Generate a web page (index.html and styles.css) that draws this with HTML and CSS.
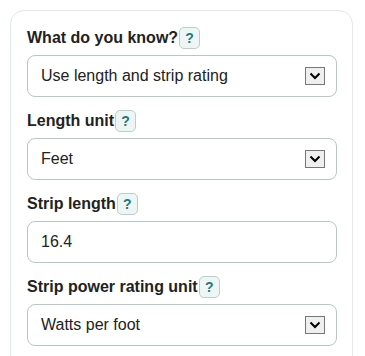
FILE: index.html
```html
<!DOCTYPE html>
<html lang="en">
<head>
    <meta charset="UTF-8">
    <meta name="viewport" content="width=device-width, initial-scale=1.0">
    <title>LED strip calculator</title>
    <link rel="stylesheet" href="styles.css">
</head>
<body>
    <div class="card">
        <div class="field">
            <div class="field-label">What do you know?<span class="help">?</span></div>
            <div class="select">
                <span>Use length and strip rating</span>
                <span class="arrow"><svg width="12" height="8" viewBox="0 0 12 8"><path d="M1.5 1.5 L6 6 L10.5 1.5" fill="none" stroke="#000" stroke-width="2"/></svg></span>
            </div>
        </div>

        <div class="field">
            <div class="field-label">Length unit<span class="help">?</span></div>
            <div class="select">
                <span>Feet</span>
                <span class="arrow"><svg width="12" height="8" viewBox="0 0 12 8"><path d="M1.5 1.5 L6 6 L10.5 1.5" fill="none" stroke="#000" stroke-width="2"/></svg></span>
            </div>
        </div>

        <div class="field">
            <div class="field-label">Strip length<span class="help">?</span></div>
            <input class="text-input" type="text" value="16.4">
        </div>

        <div class="field">
            <div class="field-label">Strip power rating unit<span class="help">?</span></div>
            <div class="select">
                <span>Watts per foot</span>
                <span class="arrow"><svg width="12" height="8" viewBox="0 0 12 8"><path d="M1.5 1.5 L6 6 L10.5 1.5" fill="none" stroke="#000" stroke-width="2"/></svg></span>
            </div>
        </div>
    </div>
</body>
</html>
```

FILE: styles.css
```css
body {
    font-family: "Liberation Sans", Arial, sans-serif;
    margin: 0;
    padding: 10px 12px 0 10px;
    background-color: #fff;
    color: #222;
}
.card {
    border: 1px solid #e2e8e8;
    border-radius: 14px;
    padding: 16px 15px 20px 16px;
}
.field {
    margin-bottom: 13px;
}
.field-label {
    display: flex;
    align-items: center;
    height: 22px;
    font-size: 16px;
    font-weight: bold;
    color: #222;
    margin-bottom: 6px;
}
.help {
    display: inline-flex;
    align-items: center;
    justify-content: center;
    width: 19px;
    height: 20px;
    margin-left: 1px;
    border: 1px solid #bccdca;
    border-radius: 5px;
    background-color: #eef6f5;
    color: #23787a;
    font-size: 14px;
    font-weight: bold;
}
.select, .text-input {
    box-sizing: border-box;
    display: flex;
    align-items: center;
    justify-content: space-between;
    width: 100%;
    height: 42px;
    padding: 0 11px 0 13px;
    border: 1px solid #b7c7c4;
    border-radius: 8px;
    background: #fff;
    font-family: inherit;
    font-size: 16px;
    color: #222;
}
.text-input {
    display: block;
    outline: none;
}
.arrow {
    box-sizing: border-box;
    display: flex;
    align-items: center;
    justify-content: center;
    width: 20px;
    height: 18px;
    border: 1px solid #767676;
    background-color: #efefef;
}
```
